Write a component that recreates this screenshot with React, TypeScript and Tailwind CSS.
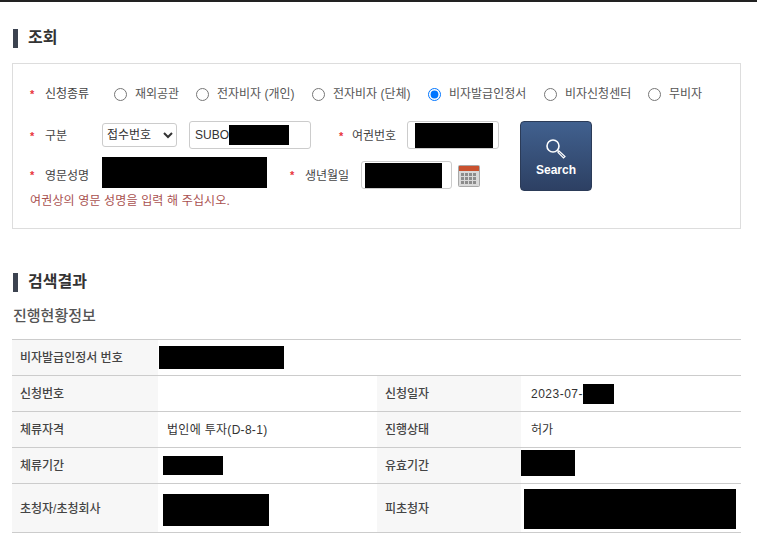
const radios = [
  { label: "재외공관", width: "w-[82px]" },
  { label: "전자비자 (개인)", width: "w-[116px]" },
  { label: "전자비자 (단체)", width: "w-[116px]" },
  { label: "비자발급인정서", width: "w-[116px]", checked: true },
  { label: "비자신청센터", width: "w-[104px]" },
  { label: "무비자", width: "w-[70px]" },
];

const Star = ({ className = "" }: { className?: string }) => (
  <span className={`text-[11px] font-bold leading-none text-[#e8343a] ${className}`}>*</span>
);

const Heading = ({ children }: { children: React.ReactNode }) => (
  <div className="flex items-center">
    <span className="h-[19px] w-[5px] bg-[#3c4350]" />
    <h2 className="ml-[10px] text-[16px] font-bold leading-[20px] text-[#333]">{children}</h2>
  </div>
);

const Black = ({ className = "" }: { className?: string }) => <div className={`bg-black ${className}`} />;

const CalendarIcon = () => (
  <svg width="22" height="22" viewBox="0 0 22 22">
    <rect x="0.5" y="0.5" width="21" height="21" rx="1" fill="#d9d9d9" stroke="#a8a8a8" />
    <rect x="1" y="1" width="20" height="5" fill="#c9512f" />
    {[3, 7, 11, 15].map((x) =>
      [8, 12, 16].map((y) => <rect key={`${x}-${y}`} x={x} y={y} width="3" height="3" fill="#8c8c8c" />)
    )}
  </svg>
);

const SearchIcon = () => (
  <svg width="22" height="22" viewBox="0 0 22 22" fill="none">
    <circle cx="8" cy="8" r="6" stroke="#fff" strokeWidth="1.6" />
    <path d="M12.5 12.5 L14 14" stroke="#fff" strokeWidth="1.4" />
    <path d="M14 13 L20 18.5 L18.5 20 L13 14.5 Z" fill="#3a5178" stroke="#fff" strokeWidth="1.2" />
  </svg>
);

const Th = ({ children, className = "" }: { children: React.ReactNode; className?: string }) => (
  <th className={`bg-[#f7f7f7] pl-2 text-left align-middle text-[12px] font-medium text-[#444] ${className}`}>{children}</th>
);

export default function App() {
  return (
    <div className="h-[552px] w-[757px] overflow-hidden border-t-2 border-[#222] bg-white font-['Liberation_Sans','Noto_Sans_CJK_KR',sans-serif] text-[12px] text-[#444]">
      <div className="px-[13px] pt-[26px]">
        <Heading>조회</Heading>
      </div>

      {/* search form */}
      <div className="ml-[12px] mt-[15px] h-[166px] w-[729px] border border-[#ddd] pl-[17px] pt-[20px]">
        <div className="flex h-[20px] items-center">
          <Star className="w-[15px]" />
          <span className="w-[69px]">신청종류</span>
          {radios.map((r) => (
            <label key={r.label} className={`flex items-center ${r.width}`}>
              <input type="radio" name="kind" defaultChecked={r.checked} className="m-0 h-[13px] w-[13px]" />
              <span className="ml-[8px] whitespace-nowrap text-[#555]">{r.label}</span>
            </label>
          ))}
        </div>

        <div className="mt-[17px] flex">
          <div className="w-[490px]">
            <div className="flex h-[28px] items-center">
              <Star className="mt-[2px] w-[15px]" />
              <span className="mt-[2px] w-[57px]">구분</span>
              <select className="h-[24px] w-[75px] rounded-[3px] border border-[#ccc] bg-white text-[12px] text-[#333]">
                <option>접수번호</option>
              </select>
              <div className="ml-[12px] flex h-[28px] w-[122px] items-center rounded-[3px] border border-[#ccc] pl-[5px] text-[#333]">
                SUBO
                <Black className="h-[20px] w-[60px]" />
              </div>
              <Star className="ml-[28px] mt-[2px] w-[13px]" />
              <span className="mt-[2px] w-[55px]">여권번호</span>
              <div className="flex h-[28px] w-[92px] items-center rounded-[3px] border border-[#ccc] pl-[7px]">
                <Black className="h-[25px] w-[78px]" />
              </div>
            </div>

            <div className="mt-[8px] flex h-[32px] items-center">
              <Star className="mt-[5px] w-[15px]" />
              <span className="mt-[5px] w-[57px]">영문성명</span>
              <Black className="mb-[2px] h-[31px] w-[165px]" />
              <Star className="ml-[23px] mt-[5px] w-[15px]" />
              <span className="mt-[5px] w-[56px]">생년월일</span>
              <div className="mt-[4px] flex h-[28px] w-[91px] items-center rounded-[3px] border border-[#ccc] pl-[3px]">
                <Black className="h-[25px] w-[77px]" />
              </div>
              <span className="ml-[6px] mt-[5px]">
                <CalendarIcon />
              </span>
            </div>

            <p className="mt-[3px] text-[12px] leading-[18px] tracking-[0.15px] text-[#a9514f]">여권상의 영문 성명을 입력 해 주십시오.</p>
          </div>

          <button className="flex h-[70px] w-[72px] flex-col items-center rounded-[4px] border border-[#2b3b58] bg-gradient-to-b from-[#41618f] to-[#2d4063] pt-[16px] text-[12px] font-bold leading-[16px] text-white">
            <SearchIcon />
            <span className="mt-[2px]">Search</span>
          </button>
        </div>
      </div>

      <div className="px-[13px] pt-[43px]">
        <Heading>검색결과</Heading>
        <h3 className="mt-[14px] text-[15px] font-medium leading-[20px] text-[#555]">진행현황정보</h3>
      </div>

      {/* result table */}
      <table className="ml-[12px] mt-[13px] w-[729px] table-fixed border-collapse border-t border-[#ccc]">
        <colgroup>
          <col className="w-[146px]" />
          <col className="w-[219px]" />
          <col className="w-[144px]" />
          <col className="w-[220px]" />
        </colgroup>
        <tbody className="text-[#333]">
          <tr className="h-[36px] border-b border-[#ccc]">
            <Th>비자발급인정서 번호</Th>
            <td colSpan={3} className="align-middle">
              <Black className="ml-px h-[23px] w-[125px]" />
            </td>
          </tr>
          <tr className="h-[36px] border-b border-[#ccc]">
            <Th>신청번호</Th>
            <td />
            <Th>신청일자</Th>
            <td className="pl-[10px] align-middle">
              <div className="flex items-center tracking-[0.5px]">
                2023-07-
                <Black className="h-[20px] w-[31px]" />
              </div>
            </td>
          </tr>
          <tr className="h-[36px] border-b border-[#ccc]">
            <Th>체류자격</Th>
            <td className="pl-[9px] align-middle tracking-[0.3px]">법인에 투자(D-8-1)</td>
            <Th>진행상태</Th>
            <td className="pl-[10px] align-middle">허가</td>
          </tr>
          <tr className="h-[36px] border-b border-[#ccc]">
            <Th>체류기간</Th>
            <td className="align-middle">
              <Black className="ml-[5px] h-[19px] w-[60px]" />
            </td>
            <Th>유효기간</Th>
            <td className="align-middle">
              <Black className="mb-[6px] h-[26px] w-[54px]" />
            </td>
          </tr>
          <tr className="h-[49px] border-b border-[#ccc]">
            <Th className="pt-[2px]">초청자/초청회사</Th>
            <td className="align-middle">
              <Black className="ml-[5px] mt-[4px] h-[32px] w-[106px]" />
            </td>
            <Th className="pt-[2px]">피초청자</Th>
            <td className="align-middle">
              <Black className="ml-[3px] mt-[2px] h-[40px] w-[212px]" />
            </td>
          </tr>
        </tbody>
      </table>
    </div>
  );
}
